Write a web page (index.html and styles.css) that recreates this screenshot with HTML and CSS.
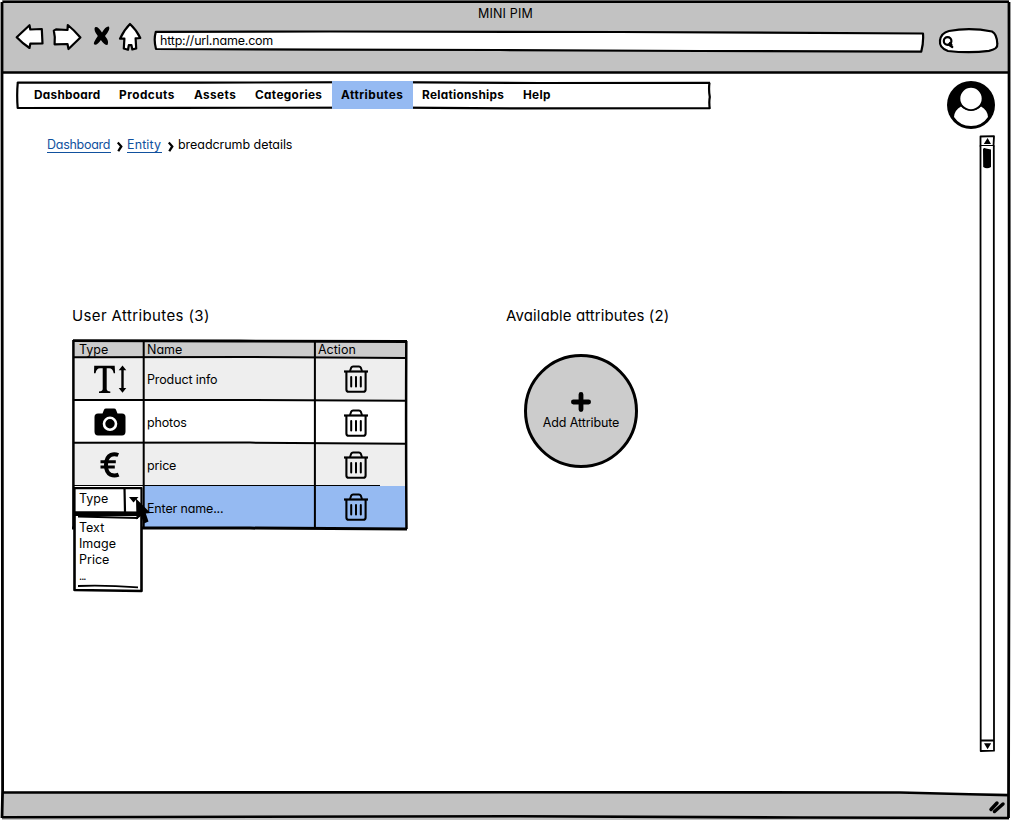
FILE: index.html
```html
<!DOCTYPE html>
<html lang="en">
<head>
<meta charset="utf-8">
<title>MINI PIM</title>
<link rel="stylesheet" href="styles.css">
</head>
<body>
<svg class="defs" width="0" height="0">
  <symbol id="trash" viewBox="0 0 26 28">
    <path d="M1 6.500H25" stroke-width="2.200"/>
    <path d="M7 6L8.300 2.500Q8.800 1.400 10 1.400H16Q17.200 1.400 17.700 2.500L19 6" stroke-width="2"/>
    <path d="M3.400 7V24.500Q3.400 26.800 5.800 26.800H20.200Q22.600 26.800 22.600 24.500V7" stroke-width="2.100"/>
    <path d="M8.200 12V21.500M13 12V21.500M17.800 12V21.500" stroke-width="2" stroke-linecap="round"/>
  </symbol>
</svg>
<div class="window">
  <header class="chrome">
    <div class="title"><span class="t-title">MINI PIM</span></div>
    <div class="toolbar">
      <svg class="ink tool" width="34" height="36" viewBox="14 20 34 36"><path d="M16.700 37.300L29.500 25.200L30.300 29.500L41.800 29L42.500 43.500L30.300 43.700L29.500 48Q22 43 16.700 37.300Z"/></svg>
      <svg class="ink tool" width="38" height="36" viewBox="48 20 38 36"><path d="M53.800 30.600L56 29.400L67.500 30L67.800 25Q74 30 80.400 37.500L68.500 49L67.500 44L54.600 44.300Q55.400 37 53.800 30.600Z"/></svg>
      <svg class="tool" width="28" height="36" viewBox="86 20 28 36"><path d="M95 27.200Q98 25.900 102 32.600Q105.700 26 108.800 26.600Q111 29 105 36Q109.600 41.500 107.400 45Q104.500 45.300 100.900 39.900Q96.800 45.900 94 44.300Q93 43 97.800 36Q93.200 30 95 27.200Z"/></svg>
      <svg class="ink tool" width="32" height="36" viewBox="114 20 32 36"><path d="M130 24Q136.500 30 140.300 38L135.600 38.300L136.200 48.500L132.300 49.400L131.400 45L128.800 45.200L128 49.700L123.800 48.500L124.400 38.600L120 38.700Q124 30 130 24Z"/></svg>
      <div class="url">
        <svg class="ink sketch" viewBox="150 20 778 36"><path d="M155.800 31.800L330 31.500L620 32L923 33.500Q923.700 42 921.300 51.600L700 51L500 50L320 49.700L156 49Q153.500 40 155.800 31.800Z"/></svg>
        <span class="url-text">http://url.name.com</span>
      </div>
      <svg class="ink tool search" width="70" height="36" viewBox="934 20 70 36"><path d="M949 31Q970 27 992 31.500Q997 34 997.300 44Q998 49 989 50.800Q970 53.500 948 51Q939 48 940 40.500Q941 33 949 31Z"/><circle cx="947.600" cy="41" r="3.800"/><path d="M948.500 44.500L952.300 47M950 43L951.500 45"/></svg>
    </div>
  </header>
  <main class="page">
    <div class="topline">
      <nav class="menu">
        <svg class="line sketch" viewBox="14 80 698 30"><path d="M17.200 82.500L200 82.600L380 82.200L540 83L710 82.800M17.800 82Q16.600 95 17.700 108L180 107.800L400 107.700L520 108.400L710 108.100M709.500 82.500Q708.500 90 709.800 97Q708.800 102 709.800 109"/></svg>
        <a class="m1">Dashboard</a><a class="m2">Prodcuts</a><a class="m3">Assets</a><a class="m4">Categories</a><a class="m5 active">Attributes</a><a class="m6">Relationships</a><a class="m7">Help</a>
      </nav>
      <svg class="avatar" width="48" height="48" viewBox="0 0 48 48"><circle cx="24" cy="24" r="24"/><path class="paper" d="M14 25.500Q17.500 29.500 24 29.500T34 25.500Q40.500 29 41 36Q35 45 24 45T7 36Q7.500 29 14 25.500Z"/><circle class="halo" cx="24" cy="17.500" r="11.600"/></svg>
    </div>
    <div class="crumbs">
      <a class="c1">Dashboard</a><svg width="8" height="12" viewBox="0 0 8 12"><path d="M1.800 1.500Q4 4 5.300 5.500Q3.500 8 2.300 10.300" class="chev"/></svg><a class="c2">Entity</a><svg width="8" height="12" viewBox="0 0 8 12"><path d="M1.800 1.500Q4 4 5.300 5.500Q3.500 8 2.300 10.300" class="chev"/></svg><span class="c3">breadcrumb details</span>
    </div>
    <div class="columns">
      <section class="user">
        <h2 class="h-user">User Attributes (3)</h2>
        <div class="table">
          <div class="cell head t-type">Type</div><div class="cell head t-name">Name</div><div class="cell head t-action">Action</div>
          <div class="cell icon odd"><svg width="36" height="32" viewBox="92 363 36 32"><path d="M94.200 364.800H114.700L115.100 372.300H113.700Q112.700 367.300 109.200 367.300H106.700V388Q106.700 390.300 110.300 390.500V392H99V390.500Q102.700 390.300 102.700 388V367.300H100Q96.500 367.300 95.500 372.300H94ZM122.500 364.500L126.300 369.200H123.700V387H126.300L122.500 391.800L118.700 387H121.300V369.200H118.700Z"/></svg></div>
          <div class="cell odd t-info">Product info</div>
          <div class="cell icon odd"><svg class="bin" width="26" height="28"><use href="#trash"/></svg></div>
          <div class="cell icon"><svg width="32" height="28" viewBox="0 0 32 28"><path d="M4 5.500H8.500L10 1.800Q10.500 .5 12 .5H20Q21.500 .5 22 1.800L23.500 5.500H28Q31.500 5.500 31.500 9V23.500Q31.500 27.500 28 27.500H4Q.5 27.500 .5 23.500V9Q.5 5.500 4 5.500Z"/><circle class="lens" cx="16" cy="15.800" r="6"/></svg></div>
          <div class="cell t-photos">photos</div>
          <div class="cell icon low"><svg class="bin" width="26" height="28"><use href="#trash"/></svg></div>
          <div class="cell icon odd"><svg class="euro" width="20" height="26" viewBox="0 0 20 26"><path d="M18.300 3Q14.500 1.500 11 2.800Q6 5 6 13Q6 20.500 10.500 22.600Q14.500 24.300 18.600 22.600" stroke-width="4"/><path d="M.5 9.800H15.800M.5 15H14.800" stroke-width="3"/></svg></div>
          <div class="cell odd t-price">price</div>
          <div class="cell icon odd low"><svg class="bin" width="26" height="28"><use href="#trash"/></svg></div>
          <div class="cell"></div>
          <div class="cell picked t-enter">Enter name...</div>
          <div class="cell icon picked"><svg class="bin" width="26" height="28"><use href="#trash"/></svg></div>
          <svg class="line sketch" viewBox="71 339 338 192"><path d="M73 340.700L240 341L407 341.500" stroke-width="2.800"/><path d="M73.400 340V527M406.300 341Q405.800 440 406.500 529" stroke-width="2.500"/><path d="M73 357.300L250 357L405 358M73 400L250 400L405 400.800M73 442.800L250 442.600L405 443.800" stroke-width="2"/><path d="M73 485.500H380" stroke-width="1.200"/><path d="M143.700 341V528M314.900 341V528" stroke-width="2"/><path d="M72 528L250 528.100L407 529" stroke-width="3"/></svg>
          <div class="dropdown">
            <svg class="line sketch" viewBox="72 486 72 107"><path class="paper" d="M74.500 488H141.500V513L142 590.500H74.500Z"/><path d="M74.500 488.200H141.500V512.500L74.500 512L74.500 487M124.500 488L125 512"/><path d="M73 514.500H142.500" stroke-width="3"/><path d="M74.500 514V590L141.500 591V513" stroke-width="2.600"/><path d="M78 516.500L138 518M78 586Q105 585 138 587.300" stroke-width="1.800"/><path class="solid" d="M129 497H138.500L133.500 502.500Z"/></svg>
            <div class="selected">Type</div>
            <ul class="options"><li class="o1">Text</li><li class="o2">Image</li><li class="o3">Price</li><li class="o4">...</li></ul>
          </div>
          <svg class="cursor" width="18" height="28" viewBox="134 498 18 28"><path d="M136 498.500L150.500 513L145.800 513.500L148.500 521.500L144 523.500L141 516L136.500 519.500Z"/></svg>
        </div>
      </section>
      <section class="available">
        <h2 class="h-avail">Available attributes (2)</h2>
        <button class="add"><svg width="20" height="20" viewBox="0 0 20 20"><path d="M10 2.400V17.600M2.400 10H17.600" stroke="#000" stroke-width="4.800" stroke-linecap="round"/></svg><span class="t-add">Add Attribute</span></button>
      </section>
    </div>
    <svg class="ink scrollbar" width="17" height="620" viewBox="979 134 17 620"><path d="M980.500 136.500L994 136.200L993.500 146H980.500Z"/><path d="M980.500 146L980.700 751L994 750.700L993.800 146M980.700 740.500H994"/><path class="solid" d="M983.800 144L987.600 138L991 144ZM984 743.200H991.200L987.600 749.300Z"/><path class="solid" d="M983 149Q984 147.500 986 148.500L991 149.500V167Q987 169.500 983.200 167Z"/></svg>
  </main>
  <footer class="status"><svg width="20" height="18" viewBox="988 798 20 18"><path d="M991 809.500L997 803M994.500 811.500L1003 804" stroke="#000" stroke-width="3.500" stroke-linecap="round"/></svg></footer>
  <svg class="line sketch frame" viewBox="0 0 1011 820"><path d="M2.500 1.800H1009" stroke-width="2.500"/><path d="M2 2V115L2.600 790L2 818M1009 2L1009.300 400L1008.500 818" stroke-width="2.800"/><path d="M3 72.500H1009M3 792.500L500 792.200L900 792.500L1009 795.200M2 817.300L150 817L520 816.300L800 817.500L1009 818" stroke-width="2.600"/></svg>
</div>
</body>
</html>
```
FILE: styles.css
```css
* { box-sizing: border-box; }
body { margin: 0; background: #fff; color: #000; font: 12.5px/16px Inter, "Noto Sans", sans-serif; font-feature-settings: "cv11" 1; }
svg { display: block; flex: none; }
.defs { position: absolute; }
.window { position: relative; width: 1011px; height: 820px; display: flex; flex-direction: column; overflow: hidden; }
.sketch { position: absolute; inset: 0; width: 100%; height: 100%; pointer-events: none; }
.ink { fill: #fff; stroke: #000; stroke-width: 2.2; stroke-linejoin: round; stroke-linecap: round; }
.line { fill: none; stroke: #000; stroke-width: 2.2; stroke-linejoin: round; }
.ink .solid, .line .solid { fill: #000; stroke: none; }
.chrome { height: 73px; background: #c2c2c2; margin: 0 2px; padding-top: 5px; }
.title { text-align: center; height: 15px; padding-top: 1px; letter-spacing: .2px; }
.toolbar { display: flex; padding-left: 12px; height: 36px; }
.url { position: relative; width: 778px; margin-left: 4px; padding: 13px 0 0 10px; line-height: 16px; }
.url-text { position: relative; letter-spacing: -.2px; }
.search { margin-left: 6px; }
.page { position: relative; flex: none; height: 720px; padding: 7px 0 0 14px; }
.topline { display: flex; height: 50px; }
.menu { position: relative; width: 698px; height: 30px; display: flex; padding-left: 11px; font-weight: 700; font-size: 11.8px; letter-spacing: .28px; }
.menu a { position: relative; padding: 6px 0 0 9px; height: 27px; margin-top: 1px; white-space: nowrap; }
.m1 { width: 85px; } .m2 { width: 75px; letter-spacing: .5px; } .m3 { width: 61px; letter-spacing: .4px; } .m4 { width: 86px; letter-spacing: .35px; }
.menu .m5 { width: 81px; height: 28px; background: #95baf2; letter-spacing: .5px; } .m6 { width: 101px; } .m7 { width: 60px; }
.avatar { margin: 1px 0 0 235px; }
.paper { fill: #fff; stroke: none; }
.halo { fill: #fff; stroke: #000; stroke-width: 1.8; }
.crumbs { display: flex; align-items: center; height: 16px; margin: 7px 0 0 33px; }
.crumbs a { color: #11519e; border-bottom: 1px solid #11519e; line-height: 14px; }
.c1 { width: 64px; letter-spacing: -.27px; } .c2 { width: 35px; letter-spacing: .12px; } .c3 { letter-spacing: -.05px; }
.crumbs svg { margin: 3px 3px 0 5px; }
.chev { fill: none; stroke: #000; stroke-width: 2.2; }
.columns { display: flex; margin: 152px 0 0 58px; }
.user { width: 434px; }
h2 { margin: 0; font-size: 15px; line-height: 20px; font-weight: 400; height: 34px; padding-top: 1px; white-space: nowrap; }
.h-user { letter-spacing: .38px; }
.h-avail { letter-spacing: .1px; }
.table { position: relative; width: 338px; height: 192px; margin-left: -1px; padding: 1px 0 0 2px; display: grid; grid-template-columns: 71px 171px 92px; grid-template-rows: 18px 43px 42px 43px 43px; }
.cell { display: flex; align-items: center; padding-left: 3px; white-space: nowrap; }
.head { background: #ccc; padding-top: 2px; }
.t-type { padding-left: 6px; }
.t-info { letter-spacing: -.12px; }
.t-photos, .t-price, .t-enter { padding-top: 2px; letter-spacing: -.15px; }
.odd { background: #eee; }
.picked { background: #95baf2; }
.icon { justify-content: center; padding: 0 0 0 3px; }
.icon .bin { margin: -2px 13px 0 0; fill: none; stroke: #000; }
.low .bin { margin-top: 1px; }
.lens { fill: none; stroke: #fff; stroke-width: 2.6; }
.euro { fill: none; stroke: #000; }
.dropdown { position: absolute; left: 1px; top: 147px; width: 72px; height: 107px; padding-left: 7px; }
.selected { position: relative; height: 34px; padding-top: 5px; }
.options { position: relative; list-style: none; margin: 0; padding: 0; }
.o4 { letter-spacing: -1px; font-size: 11px; }
.cursor { position: absolute; left: 63px; top: 159px; }
.add { width: 114px; height: 114px; margin: 15px 0 0 18px; border: 3px solid #000; border-radius: 50%; background: #ccc; display: flex; flex-direction: column; align-items: center; padding: 35px 0 0; font: inherit; font-feature-settings: inherit; color: #000; }
.t-add { margin-top: 3px; white-space: nowrap; letter-spacing: -.1px; }
.scrollbar { position: absolute; right: 15px; top: 61px; stroke-width: 1.8; }
.status { flex: 1; background: #c2c2c2; margin: 0 2px; display: flex; justify-content: flex-end; padding: 5px 1px 0 0; }
```
